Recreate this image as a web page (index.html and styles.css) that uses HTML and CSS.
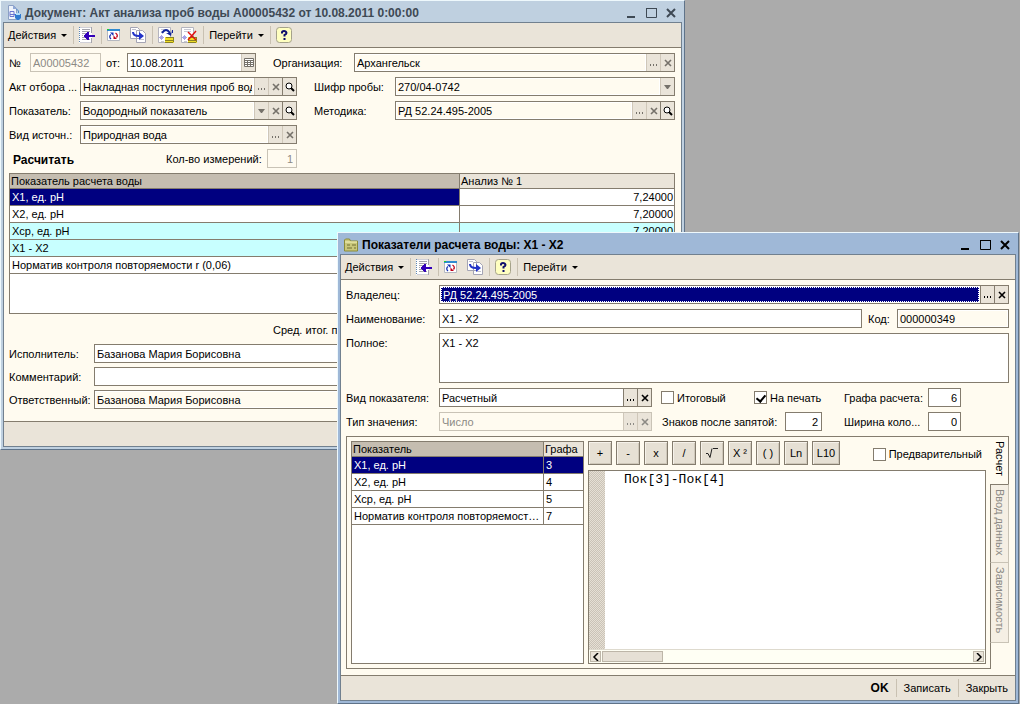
FILE: index.html
```html
<!DOCTYPE html>
<html lang="ru">
<head>
<meta charset="utf-8">
<title>Акт анализа проб воды</title>
<link rel="stylesheet" href="styles.css">
</head>
<body>
<svg class="sprite" aria-hidden="true">
  <symbol id="i-back" viewBox="0 0 17 17">
    <path fill="#fff" d="M0 0h13v16H0z"/>
    <path stroke="#5d87b5" stroke-dasharray="1 1" d="M.5 0v16"/>
    <path stroke="#d0d0d8" d="M1 .5h12M1 15.500h12"/>
    <path stroke="#a4a4ac" d="M3 2.500h8M3 4.500h8M3 6.500h4M3 8.500h1M3 10.500h4M3 12.500h8M12.500 0v6M12.500 11v5"/>
    <path fill="#3300b8" d="M5 8h1V7h1V6h1V5h2v3h6v2h-6v3H8v-1H7v-1H6v-1H5z"/>
  </symbol>
  <symbol id="i-refresh" viewBox="0 0 17 17">
    <path fill="#fff" stroke="#b5b8c0" d="M.5 2.500h12v11H.5z"/>
    <path fill="#2f8ad0" d="M0 2h13v2H0z"/><path fill="#20d030" d="M0 2h2v1H0z"/>
    <path fill="none" stroke="#152fb4" stroke-width="1.300" d="M4 12Q1.500 9.500 4 7.500"/><path fill="#152fb4" d="M3 5.500h3.500V9z"/>
    <path fill="none" stroke="#c00018" stroke-width="1.300" d="M8.500 6Q11.500 8 9.500 10.500"/><path fill="#c00018" d="M6.500 8.500V12H10z"/>
  </symbol>
  <symbol id="i-copy" viewBox="0 0 17 17">
    <path fill="#fff" stroke="#a4a4b4" d="M.5.5h7l2 2v9h-9zM6.500 3.500h6l3 3v9h-9z"/>
    <path stroke="#c0c0cc" d="M2 2.500h4M10 12.500h4"/>
    <path fill="none" stroke="#2334c8" stroke-width="2" d="M3 5q0 4 6 4"/><path fill="#2334c8" d="M9 5l5 4-5 4z"/>
  </symbol>
  <symbol id="i-post" viewBox="0 0 17 17">
    <path fill="#fff" stroke="#b4b4be" d="M.5.5h12v15H.5z"/>
    <path stroke="#c8c8d2" d="M3 2.500h7M3 4.500h2M3 14.500h3"/>
    <path stroke="#a9a4e8" d="M3.500 8v5M1 10.500h5M2 9l3 3M5 9l-3 3"/>
    <path fill="#f0de26" d="M7 10h9v6H7z"/><path stroke="#8a8226" d="M8 10.500h8M7 13.500h8M7 15.500h8M15.500 10v5"/>
    <path fill="none" stroke="#10249c" stroke-width="2" d="M4 6q4-6 8 0"/><path fill="#10249c" d="M8 6h7V3h-1l-1 6z"/>
  </symbol>
  <symbol id="i-unpost" viewBox="0 0 17 17">
    <path fill="#fff" stroke="#b4b4be" d="M.5.5h12v15H.5z"/>
    <path stroke="#c8c8d2" d="M3 2.500h7M3 4.500h7M3 14.500h3"/>
    <path stroke="#a9a4e8" d="M3.500 8v5M1 10.500h5M2 9l3 3M5 9l-3 3"/>
    <path fill="#f0de26" d="M7 10h9v6H7z"/><path stroke="#8a8226" d="M8 10.500h8M7 13.500h8M7 15.500h8M15.500 10v5"/>
    <path stroke="#e01010" stroke-width="1.500" d="M7 5l8 8M15 4l-8 9"/>
  </symbol>
  <symbol id="i-help" viewBox="0 0 17 17">
    <rect x=".5" y=".5" width="15" height="15" rx="3" fill="#ffffc0" stroke="#a5a28a"/>
    <path fill="none" stroke="#10106c" stroke-width="2" d="M6 6.500V5.500Q6 4 8 4T10.500 6Q10.500 7 8.500 8V9.500"/><path fill="#10106c" d="M7.500 11h2v2h-2z"/>
  </symbol>
  <symbol id="i-doc" viewBox="0 0 15 16">
    <path fill="#eef3fb" stroke="#8ba0c4" d="M1.500.5h5l3 3v11h-8z"/>
    <path fill="#8fa8d6" d="M6 0l4 4H6z"/>
    <path fill="none" stroke="#6a74d0" d="M3 6.500h4v5H3zM3 9.500h5"/>
    <path fill="none" stroke="#4d86c8" d="M9.500 4l2 2v3"/>
    <path fill="#2f7ad0" d="M8 9h6v4l-2 2h-2l-2-2z"/><path fill="#b0dcfa" d="M9 8h4v2H9z"/>
  </symbol>
  <symbol id="i-folder" viewBox="0 0 15 13">
    <path fill="#c9c77b" stroke="#8b8b38" d="M.5 1.500l1-1h4l1 2h7v10H.5z"/>
    <path stroke="#f7f5bf" d="M1 3.500h12"/><path stroke="#716f35" d="M3 6.500h3M8 6.500h4M3 9.500h5M10 9.500h2"/>
  </symbol>
  <symbol id="i-min" viewBox="0 0 12 12"><path fill="currentColor" d="M2 9h8v2H2z"/></symbol>
  <symbol id="i-max" viewBox="0 0 12 12"><path fill="none" stroke="currentColor" d="M1.500 1.500h10v9h-10z"/><path fill="currentColor" d="M1 1h11v1H1z"/></symbol>
  <symbol id="i-close" viewBox="0 0 12 12"><path fill="none" stroke="currentColor" stroke-width="2" d="M2 2l8 8M10 2l-8 8"/></symbol>
  <symbol id="i-x" viewBox="0 0 8 8"><path fill="none" stroke="currentColor" stroke-width="1.600" d="M1 1l6 6M7 1L1 7"/></symbol>
  <symbol id="i-dots" viewBox="0 0 8 8"><path fill="currentColor" d="M0 5h1v2H0zM3 5h1v2H3zM6 5h1v2H6z"/></symbol>
  <symbol id="i-down" viewBox="0 0 8 8"><path fill="currentColor" d="M0 2h7L4 6H3z"/></symbol>
  <symbol id="i-lens" viewBox="0 0 10 10"><circle cx="4" cy="4" r="3" fill="#fff" stroke="currentColor"/><path stroke="currentColor" stroke-width="2" d="M6 6l3 3"/></symbol>
  <symbol id="i-cal" viewBox="0 0 10 10"><path fill="#fff" stroke="currentColor" d="M.5.5h9v8h-9z"/><path stroke="currentColor" d="M0 2.500h10M0 4.500h10M0 6.500h10M3.500 2v6M6.500 2v6"/></symbol>
  <symbol id="i-left" viewBox="0 0 8 8"><path fill="none" stroke="currentColor" stroke-width="1.500" d="M6 0L2 4l4 4"/></symbol>
  <symbol id="i-right" viewBox="0 0 8 8"><path fill="none" stroke="currentColor" stroke-width="1.500" d="M2 0l4 4-4 4"/></symbol>
</svg>

<main class="desktop">
  <section class="window window-doc" aria-label="Акт анализа проб воды">
    <header class="title">
      <svg class="title-icon"><use href="#i-doc"/></svg>
      <h1>Документ: Акт анализа проб воды А00005432 от 10.08.2011 0:00:00</h1>
      <button class="ctl" aria-label="Свернуть"><svg><use href="#i-min"/></svg></button>
      <button class="ctl" aria-label="Развернуть"><svg><use href="#i-max"/></svg></button>
      <button class="ctl" aria-label="Закрыть окно"><svg><use href="#i-close"/></svg></button>
    </header>
    <div class="inner">
      <nav class="toolbar">
        <button class="menu">Действия<i class="arrow"></i></button>
        <i class="sep"></i>
        <button class="tool last" aria-label="Записать"><svg><use href="#i-back"/></svg></button>
        <i class="sep"></i>
        <button class="tool" aria-label="Перечитать"><svg><use href="#i-refresh"/></svg></button>
        <button class="tool last" aria-label="Скопировать"><svg><use href="#i-copy"/></svg></button>
        <i class="sep"></i>
        <button class="tool" aria-label="Провести"><svg><use href="#i-post"/></svg></button>
        <button class="tool last" aria-label="Отмена проведения"><svg><use href="#i-unpost"/></svg></button>
        <i class="sep"></i>
        <button class="menu">Перейти<i class="arrow"></i></button>
        <i class="sep"></i>
        <button class="tool" aria-label="Справка"><svg><use href="#i-help"/></svg></button>
      </nav>
      <div class="body">
        <div class="row">
          <label class="w-num" for="num">№</label>
          <div class="field off f-num"><input id="num" value="А00005432" disabled></div>
          <label class="w-from" for="date">от:</label>
          <div class="field f-date"><input id="date" value="10.08.2011"><button class="fb b-cal" aria-label="Календарь"><svg><use href="#i-cal"/></svg></button></div>
          <label class="w-org" for="org">Организация:</label>
          <div class="field grow ro"><input id="org" value="Архангельск" readonly><button class="fb" aria-label="Выбрать"><svg><use href="#i-dots"/></svg></button><button class="fb" aria-label="Очистить"><svg><use href="#i-x"/></svg></button></div>
        </div>
        <div class="row">
          <label class="w-left" for="act">Акт отбора ...</label>
          <div class="field f-left ro"><input id="act" value="Накладная поступления проб воды" readonly><button class="fb" aria-label="Выбрать"><svg><use href="#i-dots"/></svg></button><button class="fb" aria-label="Очистить"><svg><use href="#i-x"/></svg></button><button class="fb strong" aria-label="Открыть"><svg class="lens"><use href="#i-lens"/></svg></button></div>
          <label class="w-mid" for="code">Шифр пробы:</label>
          <div class="field grow ro"><input id="code" value="270/04-0742" readonly><button class="fb" aria-label="Список"><svg><use href="#i-down"/></svg></button></div>
        </div>
        <div class="row">
          <label class="w-left" for="ind">Показатель:</label>
          <div class="field f-left ro"><input id="ind" value="Водородный показатель" readonly><button class="fb" aria-label="Список"><svg><use href="#i-down"/></svg></button><button class="fb" aria-label="Очистить"><svg><use href="#i-x"/></svg></button><button class="fb strong" aria-label="Открыть"><svg class="lens"><use href="#i-lens"/></svg></button></div>
          <label class="w-mid" for="method">Методика:</label>
          <div class="field grow ro"><input id="method" value="РД 52.24.495-2005" readonly><button class="fb" aria-label="Выбрать"><svg><use href="#i-dots"/></svg></button><button class="fb" aria-label="Очистить"><svg><use href="#i-x"/></svg></button><button class="fb strong" aria-label="Открыть"><svg class="lens"><use href="#i-lens"/></svg></button></div>
        </div>
        <div class="row">
          <label class="w-left" for="src">Вид источн.:</label>
          <div class="field f-left ro"><input id="src" value="Природная вода" readonly><button class="fb" aria-label="Выбрать"><svg><use href="#i-dots"/></svg></button><button class="fb" aria-label="Очистить"><svg><use href="#i-x"/></svg></button></div>
        </div>
        <div class="row">
          <button class="calc">Расчитать</button>
          <label class="w-cnt" for="cnt">Кол-во измерений:</label>
          <div class="field off f-cnt"><input id="cnt" class="num" value="1" disabled></div>
        </div>
        <div class="grid-box grid-main">
          <table>
            <colgroup><col><col class="c-an"></colgroup>
            <thead><tr><th class="cur">Показатель расчета воды</th><th>Анализ № 1</th></tr></thead>
            <tbody>
              <tr><td class="sel">X1, ед. pH</td><td class="num">7,24000</td></tr>
              <tr><td>X2, ед. pH</td><td class="num">7,20000</td></tr>
              <tr class="cyan"><td>Xср, ед. pH</td><td class="num">7,20000</td></tr>
              <tr class="cyan"><td>X1 - X2</td><td class="num"></td></tr>
              <tr><td>Норматив контроля повторяемости r (0,06)</td><td class="num"></td></tr>
            </tbody>
          </table>
        </div>
        <p class="avg">Сред. итог. показатель:</p>
        <div class="rows-tight">
          <div class="row"><label class="w-foot" for="exec">Исполнитель:</label><div class="field grow"><input id="exec" value="Базанова Мария Борисовна"></div></div>
          <div class="row"><label class="w-foot" for="comm">Комментарий:</label><div class="field grow"><input id="comm" value=""></div></div>
          <div class="row"><label class="w-foot" for="resp">Ответственный:</label><div class="field grow ro"><input id="resp" value="Базанова Мария Борисовна" readonly></div></div>
        </div>
      </div>
      <footer class="foot"></footer>
    </div>
  </section>

  <section class="window window-ind active" aria-label="Показатели расчета воды">
    <header class="title">
      <svg class="title-icon"><use href="#i-folder"/></svg>
      <h1>Показатели расчета воды: X1 - X2</h1>
      <button class="ctl" aria-label="Свернуть"><svg><use href="#i-min"/></svg></button>
      <button class="ctl" aria-label="Развернуть"><svg><use href="#i-max"/></svg></button>
      <button class="ctl" aria-label="Закрыть окно"><svg><use href="#i-close"/></svg></button>
    </header>
    <div class="inner">
      <nav class="toolbar">
        <button class="menu">Действия<i class="arrow"></i></button>
        <i class="sep"></i>
        <button class="tool last" aria-label="Записать"><svg><use href="#i-back"/></svg></button>
        <i class="sep"></i>
        <button class="tool" aria-label="Перечитать"><svg><use href="#i-refresh"/></svg></button>
        <button class="tool last" aria-label="Скопировать"><svg><use href="#i-copy"/></svg></button>
        <i class="sep"></i>
        <button class="tool last" aria-label="Справка"><svg><use href="#i-help"/></svg></button>
        <i class="sep"></i>
        <button class="menu">Перейти<i class="arrow"></i></button>
      </nav>
      <div class="body">
        <div class="row">
          <label class="w-ind" for="owner">Владелец:</label>
          <div class="field grow live"><input id="owner" class="marked" value="РД 52.24.495-2005"><button class="fb" aria-label="Выбрать"><svg><use href="#i-dots"/></svg></button><button class="fb" aria-label="Очистить"><svg><use href="#i-x"/></svg></button></div>
        </div>
        <div class="row">
          <label class="w-ind" for="name">Наименование:</label>
          <div class="field grow"><input id="name" value="X1 - X2"></div>
          <label class="w-code" for="kod">Код:</label>
          <div class="field ro f-code"><input id="kod" value="000000349" readonly></div>
        </div>
        <div class="row top">
          <label class="w-ind" for="full">Полное:</label>
          <textarea id="full" class="full">X1 - X2</textarea>
        </div>
        <div class="row">
          <label class="w-ind" for="kind">Вид показателя:</label>
          <div class="field live f-kind"><input id="kind" value="Расчетный"><button class="fb" aria-label="Выбрать"><svg><use href="#i-dots"/></svg></button><button class="fb" aria-label="Очистить"><svg><use href="#i-x"/></svg></button></div>
          <label class="check k1"><input type="checkbox">Итоговый</label>
          <label class="check k2"><input type="checkbox" checked>На печать</label>
          <label class="w-col" for="col">Графа расчета:</label>
          <div class="field f-col"><input id="col" class="num" value="6"></div>
        </div>
        <div class="row">
          <label class="w-ind" for="type">Тип значения:</label>
          <div class="field off f-kind"><input id="type" value="Число" disabled><button class="fb" disabled aria-label="Выбрать"><svg><use href="#i-dots"/></svg></button><button class="fb" disabled aria-label="Очистить"><svg><use href="#i-x"/></svg></button></div>
          <label class="w-dig" for="dig">Знаков после запятой:</label>
          <div class="field f-dig"><input id="dig" class="num" value="2"></div>
          <label class="w-col after" for="wid">Ширина коло...</label>
          <div class="field f-col"><input id="wid" class="num" value="0"></div>
        </div>
        <div class="tabbed">
          <div class="panel">
            <div class="grid-box grid-side">
              <table>
                <colgroup><col><col class="c-gr"></colgroup>
                <thead><tr><th class="cur">Показатель</th><th>Графа</th></tr></thead>
                <tbody>
                  <tr><td class="sel">X1, ед. pH</td><td class="sel">3</td></tr>
                  <tr><td>X2, ед. pH</td><td>4</td></tr>
                  <tr><td>Xср, ед. pH</td><td>5</td></tr>
                  <tr><td>Норматив контроля повторяемости r (0,06)</td><td>7</td></tr>
                </tbody>
              </table>
            </div>
            <div class="work">
              <div class="ops">
                <button class="op">+</button><button class="op">-</button><button class="op">x</button><button class="op">/</button><button class="op" aria-label="Корень"><svg class="root" viewBox="0 0 14 14"><path fill="none" stroke="#222" d="M1 7.500h2l2 4L7 2.500M8 2.500h5"/></svg></button><button class="op">X ²</button><button class="op">( )</button><button class="op">Ln</button><button class="op op-wide">L10</button>
                <label class="check pre"><input type="checkbox">Предварительный</label>
              </div>
              <div class="editor">
                <div class="code"><div class="gutter"></div><textarea aria-label="Формула" spellcheck="false">Пок[3]-Пок[4]</textarea></div>
                <div class="scroll"><button aria-label="Влево"><svg><use href="#i-left"/></svg></button><div class="track"><div class="thumb"></div></div><button aria-label="Вправо"><svg><use href="#i-right"/></svg></button></div>
              </div>
            </div>
          </div>
          <div class="tabs" role="tablist">
            <button class="tab t1" role="tab" aria-selected="true">Расчет</button>
            <button class="tab t2" role="tab">Ввод данных</button>
            <button class="tab t3" role="tab">Зависимость</button>
          </div>
        </div>
      </div>
      <footer class="foot">
        <button class="ok">OK</button><i class="sep"></i><button>Записать</button><i class="sep"></i><button>Закрыть</button>
      </footer>
    </div>
  </section>
</main>
</body>
</html>
```

FILE: styles.css
```css
:root {
  --line: #847c6e;
  --soft: #c9c3b6;
  --bar: #eae4d9;
  --cream: #fffbf0;
  --navy: #000080;
}
* { box-sizing: border-box; }
body { margin: 0; font: 11px/14px "Liberation Sans", Arial, sans-serif; color: #000; background: #ababab; }
button, input, textarea { font: inherit; color: inherit; margin: 0; }
button { border: 0; padding: 0; background: none; }
svg { display: block; }
.sprite { width: 0; height: 0; position: absolute; }
.desktop { position: relative; min-height: 100vh; overflow: hidden; }

/* windows */
.window { position: absolute; background: #bfd0e0; border: 1px solid #eef8fc; border-right-color: #5f7389; border-bottom-color: #5f7389; padding: 0 2px 2px; }
.window-doc { left: 0; top: 0; right: 335px; }
.window-ind { left: 337px; top: 232px; right: 1px; }
.window.active { background: #9fb8d7; }
.title { display: flex; align-items: center; height: 21px; padding: 2px 5px 0 4px; color: #3e4954; }
.active .title { color: #000; }
.title-icon { width: 15px; height: 16px; flex: none; }
.title h1 { flex: 1; margin: 0 0 0 3px; font-size: 12px; line-height: 16px; font-weight: bold; white-space: nowrap; }
.ctl { width: 12px; height: 12px; margin-left: 8px; }
.ctl svg { width: 12px; height: 12px; }
.inner { border: 1px solid #71808f; background: var(--cream); }
.toolbar { display: flex; align-items: center; height: 25px; padding-left: 4px; background: var(--bar); border-bottom: 1px solid var(--line); }
.menu { display: flex; align-items: center; gap: 5px; padding-right: 6px; white-space: nowrap; }
.arrow { border: 3px solid transparent; border-top-color: currentColor; border-bottom: 0; }
.sep { width: 1px; height: 18px; background: #c9c1b2; flex: none; }
.toolbar .sep { margin-right: 5px; }
.tool { width: 23px; }
.tool.last { width: 22px; }
.tool svg { width: 17px; height: 17px; }
.body { display: flex; flex-direction: column; gap: 5px; padding: 5px 6px 0 5px; }
.row { display: flex; align-items: center; white-space: nowrap; }
.row label { flex: none; }
.foot { display: flex; align-items: center; justify-content: flex-end; height: 25px; padding: 0 7px; gap: 7px; background: var(--bar); border-top: 1px solid var(--line); }
.ok { font-weight: bold; font-size: 12px; }

/* fields */
.field { display: flex; height: 19px; min-width: 0; border: 1px solid var(--line); background: #fff; flex: none; }
.field.grow { flex: 1; }
.field input { flex: 1; min-width: 0; width: 0; border: 0; padding: 0 2px; background: none; outline: 0; }
.field.ro input { background: var(--cream); border: 1px solid #fff; padding: 0 1px; }
.field.off { border-color: var(--soft); background: var(--cream); color: #8c8a85; }
.field input.num { text-align: right; padding-right: 3px; }
.field input.marked { background: var(--navy); color: #fff; border: 1px dotted #fff; margin: 1px; padding: 0 1px; }
.fb { display: flex; align-items: center; justify-content: center; width: 14px; flex: none; background: var(--bar); border-left: 1px solid #cfc7b9; color: #75716a; }
.fb svg { width: 8px; height: 8px; }
.fb.strong { border-left-color: var(--line); color: #000; }
.fb .lens, .b-cal svg { width: 10px; height: 10px; }
.live .fb { color: #000; border-left-color: var(--line); }
.off .fb { color: #8c8a85; }

.w-num { width: 21px; } .f-num { width: 71px; }
.w-from { width: 26px; padding-left: 5px; } .f-date { width: 129px; }
.w-org { width: 98px; padding-left: 17px; }
.w-left { width: 71px; } .f-left { width: 217px; }
.w-mid { width: 98px; padding-left: 17px; }
.calc { width: 157px; padding: 3px 0 0 4px; text-align: left; font-weight: bold; font-size: 12px; }
.w-cnt { width: 101px; } .f-cnt { width: 30px; }
.w-foot { width: 85px; }
.w-ind { width: 93px; }
.w-code { width: 35px; padding-left: 6px; } .f-code { width: 112px; }
.f-kind { width: 213px; }
.w-col { width: 84px; } .f-col { width: 33px; }
.w-dig { width: 133px; padding-left: 10px; } .f-dig { width: 37px; }
.w-col.after { margin-left: 22px; }
.rows-tight { display: flex; flex-direction: column; gap: 4px; padding-bottom: 12px; }
.avg { margin: 4px 0 2px 264px; }
.top { align-items: flex-start; }
.top label { padding-top: 3px; }
.full { flex: 1; height: 50px; border: 1px solid var(--line); background: #fff; padding: 2px; resize: none; outline: 0; }

.check { display: flex; align-items: center; gap: 3px; }
.check input { appearance: none; width: 13px; height: 13px; border: 1px solid var(--line); background: #fff; }
.check input:checked::after { content: ""; display: block; width: 4px; height: 7px; margin: 1px 0 0 3px; border: solid #000; border-width: 0 2px 2px 0; transform: rotate(40deg); }
.check input:checked { display: flex; align-items: flex-start; }
.k1 { width: 102px; padding-left: 9px; }
.k2 { width: 90px; }

/* tables */
.grid-box { border: 1px solid var(--line); background: #fff; min-width: 0; }
table { width: 100%; table-layout: fixed; border-collapse: separate; border-spacing: 0; }
th, td { padding: 0 1px; font-weight: normal; text-align: left; border-bottom: 1px solid var(--line); border-right: 1px solid var(--line); white-space: nowrap; overflow: hidden; text-overflow: ellipsis; }
th:last-child, td:last-child { border-right: 0; }
th { height: 15px; background: var(--bar); }
th.cur { background: #c5bdb0; }
td { height: 17px; padding-left: 2px; }
td.num { text-align: right; }
td.sel { background: var(--navy); color: #fff; }
.cyan td { background: #c8ffff; }
.grid-main { min-height: 141px; }
.c-an { width: 214px; }
.c-gr { width: 39px; }

/* tabbed panel */
.tabbed { display: flex; padding-bottom: 6px; }
.panel { flex: 1; display: flex; gap: 4px; min-width: 0; padding: 4px; border: 1px solid var(--line); border-right: 0; }
.grid-side { width: 233px; flex: none; }
.work { flex: 1; min-width: 0; display: flex; flex-direction: column; gap: 5px; }
.ops { display: flex; gap: 4px; }
.op { width: 24px; height: 24px; display: flex; align-items: center; justify-content: center; border: 1px solid var(--line); background: #e6e0d4; box-shadow: inset 1px 1px #f6f2ea, inset -1px -1px #cfc8ba; }
.op-wide { width: 28px; }
.root { width: 14px; height: 14px; }
.pre { margin-left: auto; margin-right: 4px; padding-top: 2px; }
.editor { display: flex; flex-direction: column; min-height: 194px; border: 1px solid var(--line); background: #fff; flex: 1; }
.code { display: flex; flex: 1; }
.gutter { width: 16px; background: repeating-conic-gradient(#cac3b7 0 25%, #e6e0d5 0 50%) 0 0 / 2px 2px; }
.code textarea { flex: 1; min-width: 0; border: 0; padding: 1px 19px; resize: none; outline: 0; background: none; font: 13px/15px "Liberation Mono", "Courier New", monospace; }
.scroll { display: flex; height: 14px; padding: 1px; border-top: 1px solid #dedace; background: #fffff4; }
.scroll button { width: 11px; display: flex; align-items: center; justify-content: center; border: 1px solid #bdb6a8; background: var(--bar); }
.scroll svg { width: 8px; height: 8px; flex: none; }
.track { flex: 1; display: flex; padding: 0 1px; }
.thumb { width: 61px; border: 1px solid #bdb6a8; background: #e6e0d5; }
.tabs { width: 19px; display: flex; flex-direction: column; background: linear-gradient(var(--line) 0 0) 0 48px / 1px 100% no-repeat; }
.tab { writing-mode: vertical-rl; text-align: left; line-height: 17px; padding: 4px 0; }
.t1 { height: 48px; border: 1px solid var(--line); border-left: 0; border-bottom: 0; }
.t2, .t3 { background: #f5efe4; color: #8c8a85; border: 1px solid var(--soft); border-left: 1px solid var(--line); }
.t2 { height: 79px; border-top-color: var(--line); }
.t3 { height: 80px; border-top: 0; }
```
